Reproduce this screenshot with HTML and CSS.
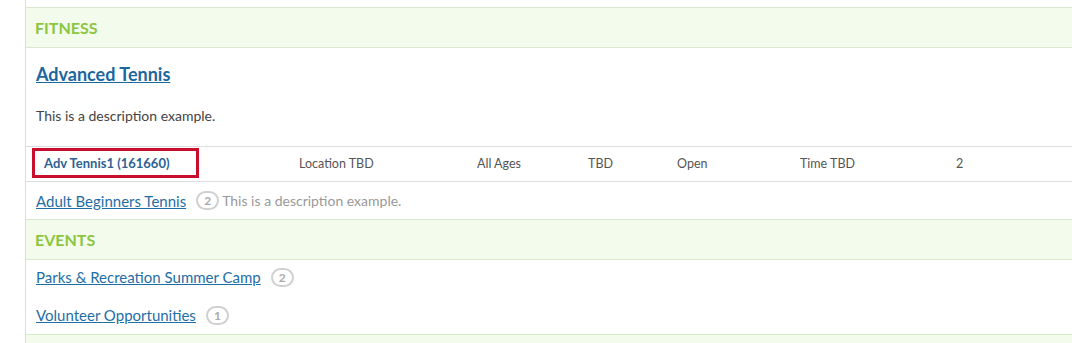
FILE: index.html
```html
<!DOCTYPE html>
<html>
<head>
<meta charset="utf-8">
<link rel="stylesheet" href="styles.css">
</head>
<body>
<div class="wrap">
  <div class="band"><span class="band-title">FITNESS</span></div>
  <div class="activity">
    <a class="activity-title" href="#">Advanced Tennis</a>
    <p class="activity-desc">This is a description example.</p>
  </div>
  <div class="session-row">
    <div class="cell first"><span class="session-name">Adv Tennis1 (161660)</span></div>
    <div class="cell">Location TBD</div>
    <div class="cell">All Ages</div>
    <div class="cell">TBD</div>
    <div class="cell">Open</div>
    <div class="cell">Time TBD</div>
    <div class="cell">2</div>
  </div>
  <div class="item-row">
    <a class="item-link" href="#">Adult Beginners Tennis</a><span class="badge">2</span><span class="item-desc">This is a description example.</span>
  </div>
  <div class="band"><span class="band-title">EVENTS</span></div>
  <div class="item-list">
    <div class="item"><a class="item-link" href="#">Parks &amp; Recreation Summer Camp</a><span class="badge">2</span></div>
    <div class="item"><a class="item-link" href="#">Volunteer Opportunities</a><span class="badge">1</span></div>
  </div>
  <div class="band band-last"></div>
</div>
</body>
</html>
```

FILE: styles.css
```css
* { box-sizing: border-box; }
html, body { margin: 0; padding: 0; background: #fff; height: 343px; overflow: hidden; }
body {
  font-family: Lato, "Open Sans", "Liberation Sans", sans-serif;
  color: #444;
}
.wrap {
  margin-left: 25px;
  border-left: 1px solid #dddddd;
  padding-top: 7px;
}
.band {
  height: 41px;
  background: #f3fbec;
  border-top: 1px solid #dbe8cf;
  border-bottom: 1px solid #dbe8cf;
  display: flex;
  align-items: center;
  padding-left: 9px;
}
.band-title {
  font-size: 16px;
  font-weight: 700;
  color: #8cc63f;
}
.band-last {
  height: 20px;
  border-top-color: #d6edc4;
  border-bottom: none;
}
.activity {
  padding: 14px 0 0 10px;
}
.activity-title {
  display: inline-block;
  font-size: 18px;
  line-height: 24px;
  font-weight: 700;
  color: #1b679e;
  text-decoration: underline;
}
.activity-desc {
  margin: 21px 0 21px;
  font-size: 14px;
  line-height: 18px;
  color: #444;
}
.session-row {
  display: grid;
  grid-template-columns: 267px 178px 111px 89px 123px 156px 1fr;
  align-items: center;
  border-top: 1px solid #dddddd;
  border-bottom: 1px solid #dddddd;
  padding: 1px 0 3px 6px;
  font-size: 12.5px;
  color: #555;
}
.session-name {
  display: inline-block;
  border: 3px solid #c8102e;
  height: 30px;
  line-height: 24px;
  padding: 0 26px 0 9px;
  font-size: 13px;
  font-weight: 700;
  color: #2e6194;
}
.item-row {
  display: flex;
  align-items: center;
  height: 37px;
  padding-left: 10px;
}
.item-link {
  font-size: 15px;
  line-height: 20px;
  color: #1f6ea6;
  text-decoration: underline;
}
.badge {
  display: inline-flex;
  align-items: center;
  justify-content: center;
  width: 23px;
  height: 19px;
  margin-left: 10px;
  border: 2px solid #d0d0d0;
  border-radius: 10px;
  font-size: 12px;
  font-weight: 700;
  color: #aaaaaa;
}
.item-desc {
  margin-left: 3px;
  font-size: 14px;
  color: #999;
}
.item-list {
  display: flex;
  flex-direction: column;
  gap: 18px;
  padding: 7px 0 9px 10px;
}
.item {
  display: flex;
  align-items: center;
  height: 20px;
}
```
